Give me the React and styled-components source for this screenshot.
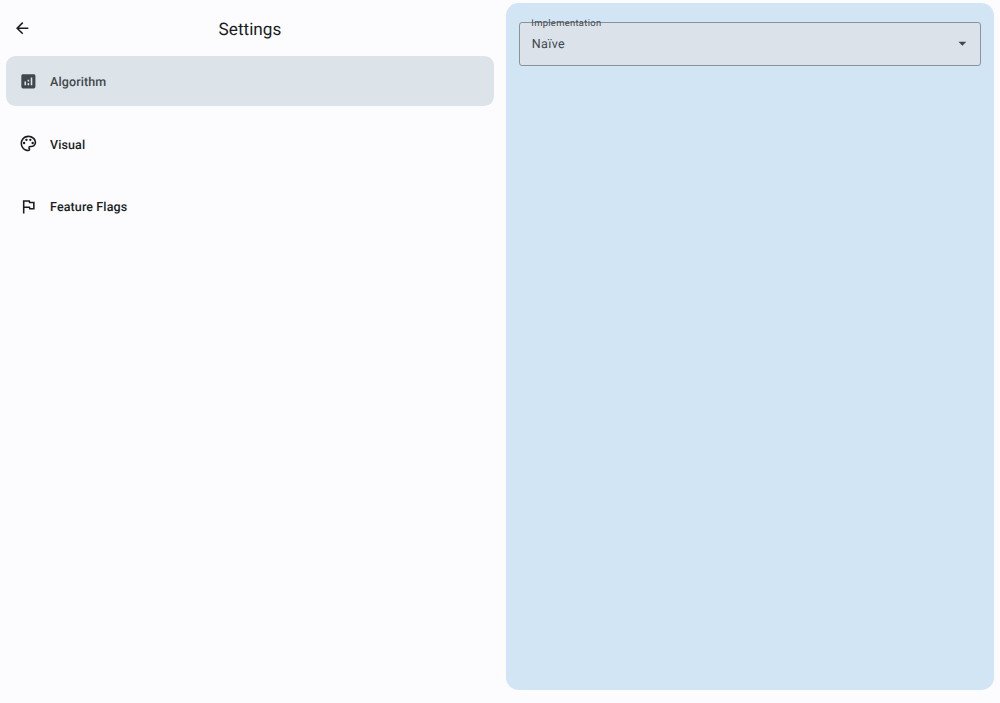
import React from 'react';
import styled, { createGlobalStyle } from 'styled-components';
import { MdArrowBack, MdAnalytics, MdOutlinePalette, MdOutlineFlag, MdArrowDropDown } from 'react-icons/md';

const GlobalStyle = createGlobalStyle`
  *, *::before, *::after { box-sizing: border-box; }
  html, body, #root { height: 100%; margin: 0; }
  body {
    background: #fcfcff;
    color: #1a1c1e;
    font-family: Roboto, "Liberation Sans", sans-serif;
    text-rendering: geometricPrecision;
    overflow: hidden;
  }
`;
const Layout = styled.main`
  display: grid;
  grid-template-columns: 1fr 1fr;
  height: 703px;
`;
const Sidebar = styled.section`
  padding: 0 6.25px;
`;
const Header = styled.header`
  display: grid;
  grid-template-columns: 31.25px 1fr 31.25px;
  align-items: center;
  height: 56.25px;
`;
const BackButton = styled.button`
  display: flex;
  justify-content: center;
  padding: 0 0.2px 0.4px 0;
  border: 0;
  background: none;
  color: #1a1c1e;
  font-size: 18.4px;
`;
const Title = styled.h1`
  margin: 3px 0 0;
  font-size: 17.2px;
  font-weight: 400;
  line-height: 22px;
  text-align: center;
`;
const Nav = styled.nav`
  display: flex;
  flex-direction: column;
  gap: 12.5px;
`;
const NavItem = styled.a`
  display: flex;
  align-items: center;
  gap: 12.5px;
  height: 50px;
  padding: 0 12.5px;
  border-radius: 9.4px;
  background: ${({ $active }) => ($active ? '#dce3e9' : 'transparent')};
  color: ${({ $active }) => ($active ? '#41484d' : '#1a1c1e')};
  font-size: 12.5px;
  font-weight: 500;
  letter-spacing: 0.12px;
  svg { font-size: 18.75px; }
`;
const ItemLabel = styled.span`
  padding-top: 3.6px;
  line-height: 16px;
`;
const Detail = styled.section`
  padding: 3.1px 6.25px 12.7px;
`;
const Panel = styled.div`
  height: 100%;
  padding: 18.9px 12.5px;
  border-radius: 12.5px;
  background: #d2e5f4;
`;
const Select = styled.div`
  position: relative;
  display: flex;
  align-items: center;
  justify-content: space-between;
  height: 43.75px;
  padding: 0 8.75px 0 12px;
  border: 1px solid #8b9299;
  border-radius: 3px;
  background: #dce2e9;
  color: #41484d;
  font-size: 12.5px;
  line-height: 16px;
  letter-spacing: 0.39px;
  svg { font-size: 18.75px; }
`;
const Value = styled.span`
  padding-top: 1.6px;
`;
const Label = styled.span`
  position: absolute;
  top: -5px;
  left: 11.5px;
  font-size: 9.375px;
  line-height: 12px;
  letter-spacing: 0.33px;
`;

const items = [
  { label: 'Algorithm', Icon: MdAnalytics, active: true },
  { label: 'Visual', Icon: MdOutlinePalette },
  { label: 'Feature Flags', Icon: MdOutlineFlag },
];

export default function App() {
  return (
    <>
      <GlobalStyle />
      <Layout>
        <Sidebar>
          <Header>
            <BackButton aria-label="Back"><MdArrowBack /></BackButton>
            <Title>Settings</Title>
          </Header>
          <Nav>
            {items.map(({ label, Icon, active }) => (
              <NavItem key={label} $active={active}>
                <Icon />
                <ItemLabel>{label}</ItemLabel>
              </NavItem>
            ))}
          </Nav>
        </Sidebar>
        <Detail>
          <Panel>
            <Select>
              <Label>Implementation</Label>
              <Value>Naïve</Value>
              <MdArrowDropDown />
            </Select>
          </Panel>
        </Detail>
      </Layout>
    </>
  );
}
